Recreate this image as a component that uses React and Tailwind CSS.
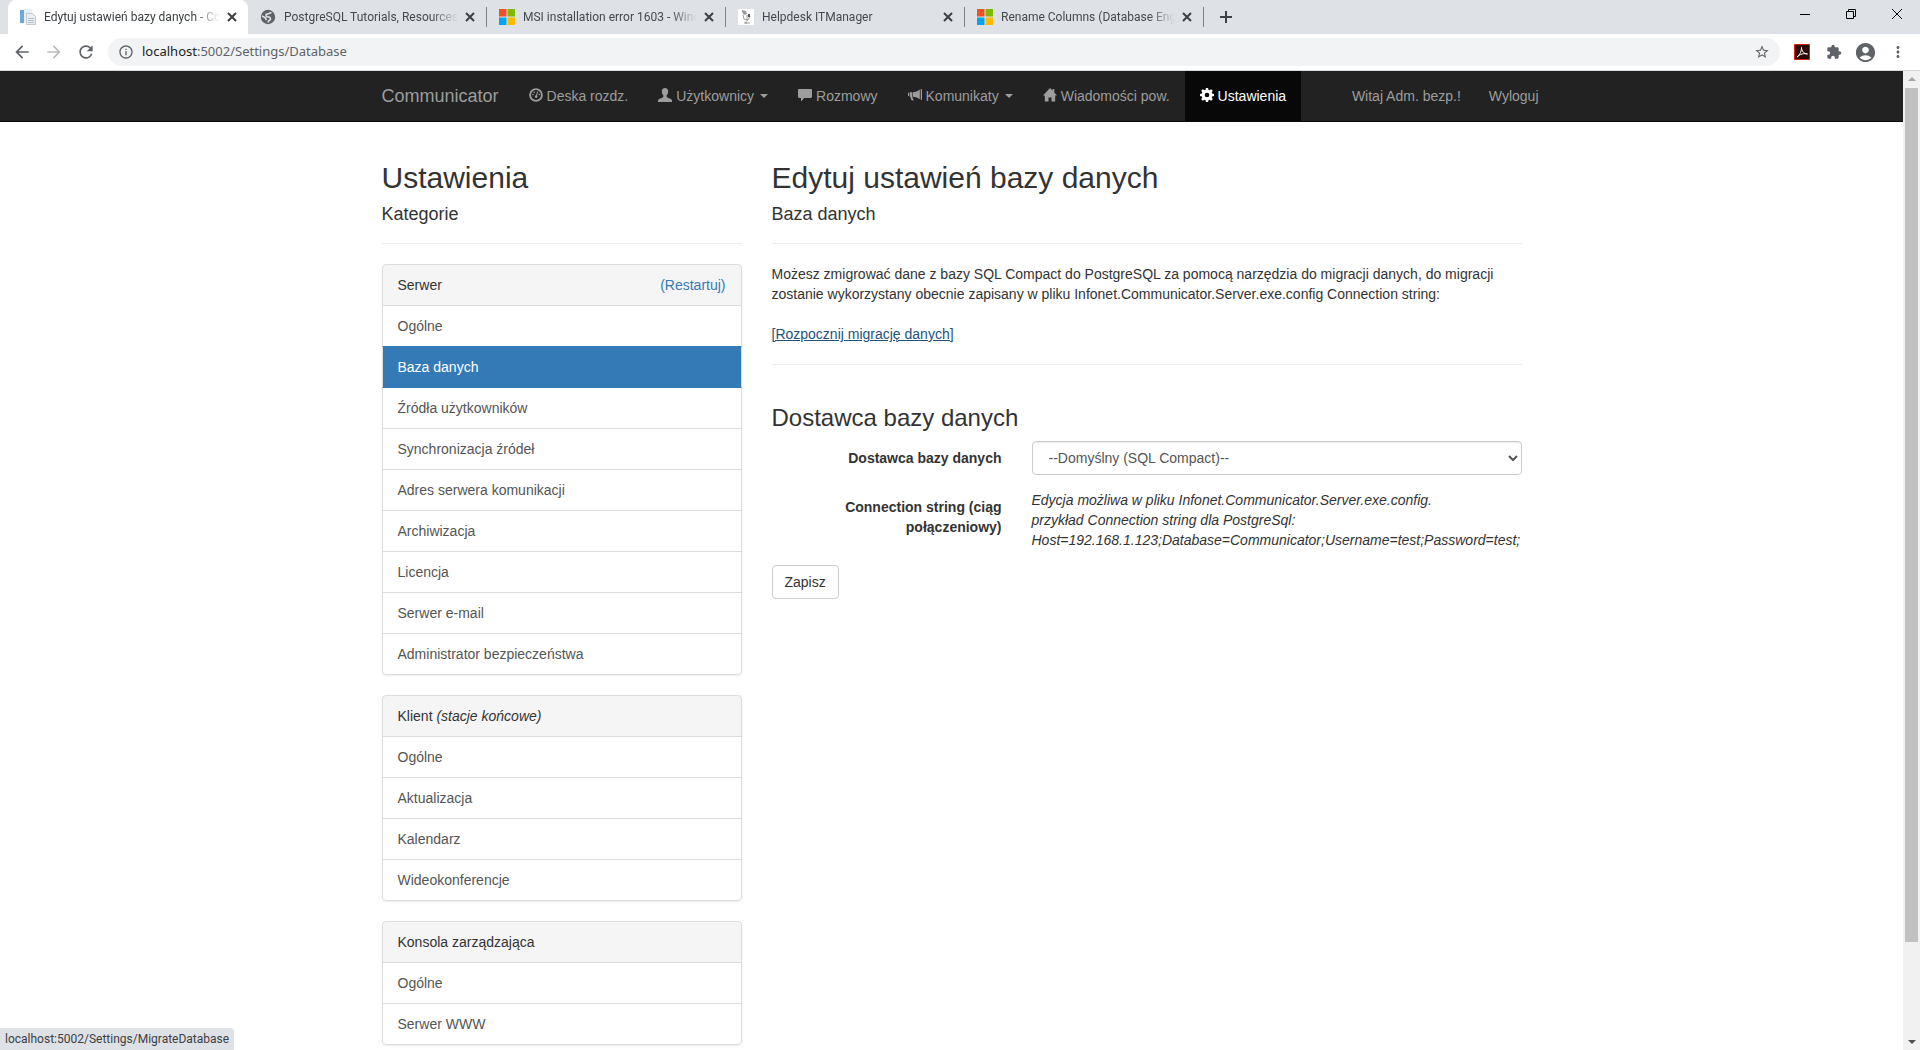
import { useState } from "react";
import { MdStarBorder, MdExtension, MdAccountCircle, MdMoreVert, MdRefresh, MdArrowBack, MdArrowForward, MdInfoOutline } from "react-icons/md";

const tabs = [
  { title: "Edytuj ustawień bazy danych - Co", icon: "page", active: true },
  { title: "PostgreSQL Tutorials, Resources a", icon: "globe" },
  { title: "MSI installation error 1603 - Wind", icon: "ms" },
  { title: "Helpdesk ITManager", icon: "desk" },
  { title: "Rename Columns (Database Engi", icon: "ms" },
];

const navItems = [
  { label: "Deska rozdz.", icon: "dashboard" },
  { label: "Użytkownicy", icon: "user", caret: true },
  { label: "Rozmowy", icon: "comment" },
  { label: "Komunikaty", icon: "bullhorn", caret: true },
  { label: "Wiadomości pow.", icon: "home" },
  { label: "Ustawienia", icon: "cog", active: true },
];

const groups = [
  {
    title: "Serwer",
    action: "(Restartuj)",
    items: [
      "Ogólne",
      "Baza danych",
      "Źródła użytkowników",
      "Synchronizacja źródeł",
      "Adres serwera komunikacji",
      "Archiwizacja",
      "Licencja",
      "Serwer e-mail",
      "Administrator bezpieczeństwa",
    ],
  },
  {
    title: "Klient",
    note: "(stacje końcowe)",
    items: ["Ogólne", "Aktualizacja", "Kalendarz", "Wideokonferencje"],
  },
  { title: "Konsola zarządzająca", items: ["Ogólne", "Serwer WWW"] },
];

const Favicon = ({ type }) => {
  if (type === "ms") {
    return (
      <svg className="w-4 h-4 shrink-0" viewBox="0 0 16 16">
        <path fill="#f25022" d="M0 0h7.5v7.5H0z" />
        <path fill="#7fba00" d="M8.5 0H16v7.5H8.5z" />
        <path fill="#00a4ef" d="M0 8.5h7.5V16H0z" />
        <path fill="#ffb900" d="M8.5 8.5H16V16H8.5z" />
      </svg>
    );
  }
  if (type === "globe") {
    return (
      <svg className="w-4 h-4 shrink-0" viewBox="0 0 16 16">
        <circle cx="8" cy="8" r="7.2" fill="#5f6368" />
        <path fill="none" stroke="#dee1e6" strokeWidth="1.6" d="M11.500 3.500L9 4.500 6 5.500 6.500 7.500l3.500.8.5 2.200-2 1.500-.5 1.500M2 7l3 1.500 1.500 2.500" />
      </svg>
    );
  }
  if (type === "desk") {
    return (
      <svg className="w-4 h-4 shrink-0" viewBox="0 0 16 16">
        <path fill="#fff" d="M0 0h16v16H0z" />
        <path fill="#999" d="M4 1l4 1 1 3-3 1-2-3z" />
        <path fill="none" stroke="#999" d="M5 6l1 4 4 1 2-4M9 6v6M6 14h6M8 12v3" />
        <path fill="#555" d="M10 5h2v3h-2z" />
      </svg>
    );
  }
  return (
    <svg className="w-4 h-4 shrink-0" viewBox="0 0 16 16">
      <path fill="#6aa9d8" d="M0 1h4v13H0z" />
      <path fill="#e8eef3" d="M4 0h8v14H4z" />
      <path fill="#eceff2" stroke="#c3c9cf" d="M6.5 4.500h6l3 3v8h-9z" />
      <path stroke="#b5bec7" d="M8 9.500h6M8 11.500h6M8 13.500h6" />
    </svg>
  );
};

const NavIcon = ({ name }) => (
  <svg className="w-[14px] h-[14px] mb-[2px] shrink-0" viewBox="0 0 14 14" fill="currentColor">
    {name === "dashboard" && (
      <>
        <circle cx="7" cy="7" r="5.9" fill="none" stroke="currentColor" strokeWidth="1.900" />
        <circle cx="3.900" cy="6.500" r=".8" />
        <circle cx="5.200" cy="4.200" r=".8" />
        <circle cx="10.200" cy="6.500" r=".8" />
        <path d="M8.300 3.200l1 .4L8 7.600a1.300 1.300 0 1 1-1-.3z" />
      </>
    )}
    {name === "user" && (
      <path d="M7 0c2 0 3.200 1.400 3.200 3.400 0 1.500-.6 3-1.500 3.900v1.300c0 .4.200.6.600.8l3.500 1.600c.7.300 1.200.9 1.200 1.700V14H0v-1.300c0-.8.500-1.400 1.200-1.700l3.500-1.600c.4-.2.600-.4.600-.8V7.300C4.400 6.400 3.800 4.900 3.800 3.400 3.800 1.400 5 0 7 0z" />
    )}
    {name === "comment" && (
      <path d="M1.200 1h11.600c.7 0 1.200.5 1.200 1.200v6.600c0 .7-.5 1.200-1.200 1.200H6.200L3 13.500V10H1.200C.5 10 0 9.500 0 8.800V2.200C0 1.500.5 1 1.200 1z" />
    )}
    {name === "bullhorn" && (
      <path d="M12.700 1h.6c.4 0 .7.300.7.700v9.600c0 .4-.3.700-.7.700h-.6zM11.800 1.400v9.800C9.700 9.800 7.500 9 4.800 8.800V4.200c2.700-.2 5-1.200 7-2.800zM1.700 4.200h2.500v4.600l1.300 3c.1.400-.1.700-.5.700H4c-.3 0-.5-.2-.6-.5l-1.200-3.200h-.5zM0 4.800h1v3.300H0z" />
    )}
    {name === "home" && (
      <path d="M7 0l2.500 2.500V1h1.800v3.400L14 7.400H12.200V13.500H8.500V9.500h-3v4H1.800V7.400H0z" />
    )}
    {name === "cog" && (
      <path
        fillRule="evenodd"
        d="M5.900 0h2.200l.4 1.900 1 .4L11.200 1.200l1.600 1.600-1.100 1.700.4 1L14 5.900v2.200l-1.900.4-.4 1 1.100 1.700-1.600 1.600-1.700-1.100-1 .4L8.100 14H5.900l-.4-1.900-1-.4-1.700 1.100-1.600-1.600 1.100-1.700-.4-1L0 8.100V5.900l1.900-.4.400-1L1.200 2.800l1.600-1.600 1.700 1.100 1-.4zM7 4.700a2.300 2.300 0 1 0 0 4.600 2.300 2.300 0 0 0 0-4.600z"
      />
    )}
  </svg>
);

const Cross = ({ className }) => (
  <svg className={className} viewBox="0 0 10 10" fill="none" stroke="currentColor">
    <path d="M1 1l8 8M9 1l-8 8" />
  </svg>
);

const BrowserTab = ({ tab }) => (
  <div
    className={`flex items-center h-[34px] pl-3 pr-2 text-[12px] ${
      tab.active ? "w-[240px] bg-white rounded-t-lg text-[#3c4043]" : "w-[238px] text-[#45494d]"
    }`}
  >
    <Favicon type={tab.icon} />
    <span className="flex-1 min-w-0 ml-2 whitespace-nowrap mask-r-from-85%">{tab.title}</span>
    <button type="button" aria-label="Zamknij kartę" className="ml-1 p-[3px] text-[#3c4043]">
      <Cross className="w-[10px] h-[10px] stroke-2" />
    </button>
  </div>
);

const Browser = () => (
  <header className="font-['Roboto',sans-serif] shrink-0">
    <div className="flex justify-between bg-[#dee1e6]">
      <div className="flex items-center pl-2">
        {tabs.map((tab, i) => (
          <div key={tab.title} className="flex items-center">
            <BrowserTab tab={tab} />
            {i > 0 && <span className="w-px h-5 bg-[#808387]" />}
          </div>
        ))}
        <button type="button" aria-label="Nowa karta" className="ml-4 text-[#3c4043]">
          <svg className="w-3 h-3" viewBox="0 0 12 12" stroke="currentColor" strokeWidth="2">
            <path d="M6 0v12M0 6h12" />
          </svg>
        </button>
      </div>
      <div className="flex items-center gap-9 pr-[18px] h-7 text-black">
        <button type="button" aria-label="Minimalizuj">
          <svg className="w-[10px] h-[10px]" viewBox="0 0 10 10" stroke="currentColor">
            <path d="M0 5.500h10" />
          </svg>
        </button>
        <button type="button" aria-label="Przywróć">
          <svg className="w-[10px] h-[10px]" viewBox="0 0 10 10" stroke="currentColor" fill="none">
            <path d="M.5 2.500h7v7h-7zM2.500 2.500v-2h7v7h-2" />
          </svg>
        </button>
        <button type="button" aria-label="Zamknij">
          <svg className="w-[10px] h-[10px]" viewBox="0 0 10 10" stroke="currentColor">
            <path d="M0 0l10 10M10 0L0 10" />
          </svg>
        </button>
      </div>
    </div>
    <div className="flex items-center h-[37px] bg-white border-b border-[#d5d8dc] pl-3 pr-[13px] text-[#5f6368]">
      <button type="button" aria-label="Wstecz"><MdArrowBack className="w-5 h-5" /></button>
      <button type="button" aria-label="Dalej" className="ml-3 text-[#babcbe]"><MdArrowForward className="w-5 h-5" /></button>
      <button type="button" aria-label="Odśwież" className="ml-3"><MdRefresh className="w-5 h-5" /></button>
      <div className="flex flex-1 items-center ml-3 h-7 rounded-full bg-[#f1f3f4] px-[10px]">
        <MdInfoOutline className="w-4 h-4" />
        <a href="#" className="flex-1 ml-2 font-['Noto_Sans',sans-serif] text-[13px]">
          <span className="text-[#202124]">localhost</span>:5002/Settings/Database
        </a>
        <button type="button" aria-label="Dodaj zakładkę"><MdStarBorder className="w-4 h-4" /></button>
      </div>
      <button type="button" aria-label="Adobe Acrobat" className="ml-[14px]">
        <svg className="w-4 h-4" viewBox="0 0 16 16">
          <path fill="#2b0a06" stroke="#d32011" d="M.5.5h15v15H.5z" />
          <path fill="none" stroke="#fff" d="M3 13c2-1 4.500-5 4.500-9.500C7.500 7 10 10 13.500 10 10 9 6 10 3 13z" />
        </svg>
      </button>
      <button type="button" aria-label="Rozszerzenia" className="ml-4"><MdExtension className="w-4 h-4" /></button>
      <button type="button" aria-label="Profil" className="ml-3"><MdAccountCircle className="w-[23px] h-[23px]" /></button>
      <button type="button" aria-label="Menu" className="ml-3"><MdMoreVert className="w-[18px] h-[18px]" /></button>
    </div>
  </header>
);

const Navbar = () => (
  <nav className="bg-[#222] border-b border-[#080808] text-[#9d9d9d]">
    <div className="flex items-center mx-auto w-full max-w-[1170px] h-[50px] whitespace-nowrap">
      <a href="#" className="px-[15px] text-[18px]">Communicator</a>
      {navItems.map((item) => (
        <a
          key={item.label}
          href="#"
          className={`flex items-center gap-1 h-full px-[15px] ${item.active ? "bg-[#080808] text-white" : ""}`}
        >
          <NavIcon name={item.icon} />
          {item.label}
          {item.caret && <span className="ml-[2px] border-x-4 border-t-4 border-x-transparent border-t-current" />}
        </a>
      ))}
      <div className="flex ml-auto -mr-4">
        <a href="#" className="px-[14px]">Witaj Adm. bezp.!</a>
        <a href="#" className="px-[14px]">Wyloguj</a>
      </div>
    </div>
  </nav>
);

const Sidebar = ({ active, onSelect }) => (
  <aside className="w-[390px] px-[15px] shrink-0">
    <h2 className="text-[30px] leading-[33px]">Ustawienia</h2>
    <h4 className="mt-[11px] text-[18px] leading-[18px]">Kategorie</h4>
    <hr className="my-5 border-[#eee]" />
    {groups.map((group) => (
      <div key={group.title} className="mb-5 rounded shadow-[0_1px_2px_rgba(0,0,0,0.075)]">
        <div className="flex justify-between px-[15px] py-[10px] rounded-t border border-[#ddd] bg-[#f5f5f5]">
          <span>
            {group.title} {group.note && <em>{group.note}</em>}
          </span>
          {group.action && <a href="#" className="text-[#337ab7]">{group.action}</a>}
        </div>
        {group.items.map((item) => (
          <a
            key={item}
            href="#"
            onClick={() => onSelect(item)}
            className={`block -mt-px px-[15px] py-[10px] border last:rounded-b ${
              item === active
                ? "relative border-x-[#ddd] border-y-[#337ab7] bg-[#337ab7] text-white"
                : "border-[#ddd] text-[#555]"
            }`}
          >
            {item}
          </a>
        ))}
      </div>
    ))}
  </aside>
);

const DatabaseForm = () => (
  <main className="flex-1 px-[15px]">
    <h2 className="text-[30px] leading-[33px]">Edytuj ustawień bazy danych</h2>
    <h4 className="mt-[11px] text-[18px] leading-[18px]">Baza danych</h4>
    <hr className="my-5 border-[#eee]" />
    <p>
      Możesz zmigrować dane z bazy SQL Compact do PostgreSQL za pomocą narzędzia do migracji danych, do migracji
      zostanie wykorzystany obecnie zapisany w pliku Infonet.Communicator.Server.exe.config Connection string:
    </p>
    <a href="#" className="inline-block mt-5 text-[#23527c] underline">[Rozpocznij migrację danych]</a>
    <hr className="my-5 border-[#eee]" />

    <form onSubmit={(e) => e.preventDefault()}>
      <h3 className="mt-10 mb-[10px] text-[24px] leading-[26px]">Dostawca bazy danych</h3>
      <div className="grid grid-cols-[230px_1fr] gap-x-[30px] gap-y-[15px]">
        <label htmlFor="provider" className="pt-[7px] text-right font-bold">Dostawca bazy danych</label>
        <select
          id="provider"
          className="w-full h-[34px] px-3 rounded border border-[#ccc] bg-white text-[#555] shadow-[inset_0_1px_1px_rgba(0,0,0,0.075)]"
        >
          <option>--Domyślny (SQL Compact)--</option>
        </select>
        <span className="pt-[7px] text-right font-bold">Connection string (ciąg połączeniowy)</span>
        <p className="italic">
          Edycja możliwa w pliku Infonet.Communicator.Server.exe.config.
          <br />
          przykład Connection string dla PostgreSql:
          <br />
          Host=192.168.1.123;Database=Communicator;Username=test;Password=test;
        </p>
      </div>
      <button type="submit" className="mt-[15px] h-[34px] px-3 rounded border border-[#ccc] bg-white">Zapisz</button>
    </form>
  </main>
);

const Scrollbar = () => (
  <div className="flex flex-col items-center w-[17px] py-[6px] shrink-0 bg-[#f1f1f1]">
    <span className="border-x-4 border-b-4 border-x-transparent border-b-[#a3a3a3]" />
    <span className="mt-[7px] w-[13px] grow-[854] bg-[#c1c1c1]" />
    <span className="grow-[98]" />
    <span className="border-x-4 border-t-4 border-x-transparent border-t-[#505050]" />
  </div>
);

export default function App() {
  const [active, setActive] = useState("Baza danych");

  return (
    <div className="flex flex-col h-screen overflow-hidden bg-white">
      <Browser />
      <div className="flex flex-1 min-h-0">
        <div className="flex-1 overflow-hidden font-['Liberation_Sans',Arial,sans-serif] text-[14px] leading-5 text-[#333]">
          <Navbar />
          <div className="flex mx-auto w-full max-w-[1170px] pt-[39px]">
            <Sidebar active={active} onSelect={setActive} />
            <DatabaseForm />
          </div>
        </div>
        <Scrollbar />
      </div>

      {/* Link target preview in the corner */}
      <div className="fixed bottom-0 left-0 h-[22px] px-[5px] rounded-tr bg-[#dee1e6] font-['Roboto',sans-serif] text-[12px] leading-[22px] text-[#3c4043]">
        localhost:5002/Settings/MigrateDatabase
      </div>
    </div>
  );
}
